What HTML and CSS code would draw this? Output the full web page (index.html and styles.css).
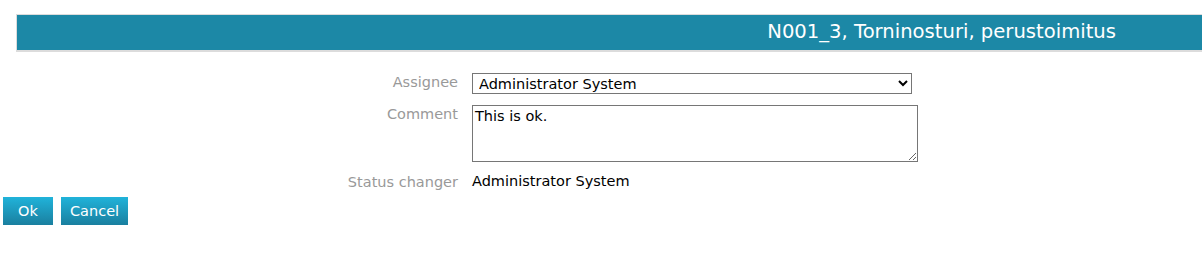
FILE: index.html
```html
<!DOCTYPE html>
<html lang="en">
<head>
  <meta charset="UTF-8">
  <title>Status change</title>
  <link rel="stylesheet" href="styles.css">
</head>
<body>

<div class="header">
  <h1 class="title">N001_3, Torninosturi, perustoimitus</h1>
</div>

<div class="form">
  <label class="label" for="assignee">Assignee</label>
  <div class="field">
    <select id="assignee" class="select">
      <option>Administrator System</option>
    </select>
  </div>

  <label class="label" for="comment">Comment</label>
  <div class="field">
    <textarea id="comment" class="comment">This is ok.</textarea>
  </div>

  <div class="label">Status changer</div>
  <div class="field value">Administrator System</div>
</div>

<div class="buttons">
  <button class="btn">Ok</button>
  <button class="btn">Cancel</button>
</div>

</body>
</html>
```

FILE: styles.css
```css
body {
  margin: 0;
  font-family: 'DejaVu Sans', sans-serif;
  font-size: 14.5px;
  color: #000;
  background-color: #fff;
}

.header {
  margin: 14px 0 0 16px;
  height: 35px;
  background-color: #1c88a6;
  border: 1px solid #dcdcdc;
  border-right: none;
  border-bottom: 2px solid #dcdcdc;
  display: flex;
  justify-content: flex-end;
  align-items: center;
}

.title {
  margin: 0 86px 2px 0;
  font-size: 19.6px;
  font-weight: normal;
  color: #fff;
}

.form {
  display: grid;
  grid-template-columns: 130px 460px;
  column-gap: 14px;
  row-gap: 11px;
  margin: 21px 0 0 328px;
  align-items: start;
}

.label {
  text-align: right;
  color: #999;
  padding-top: 1px;
}

.select {
  width: 440px;
  height: 21px;
  font-family: inherit;
  font-size: 14.5px;
  border: 1px solid #767676;
  border-radius: 0;
  background-color: #fff;
  padding: 0 2px;
}

.comment {
  display: block;
  width: 440px;
  height: 51px;
  font-family: inherit;
  font-size: 14.5px;
  border: 1px solid #767676;
  padding: 2px;
  resize: both;
}

.value {
  padding-top: 0;
}

.buttons {
  margin: 7px 0 0 3px;
  display: flex;
  gap: 8px;
}

.btn {
  height: 28px;
  padding: 0 9px;
  min-width: 50px;
  font-family: inherit;
  font-size: 14.5px;
  color: #fff;
  border: none;
  background: linear-gradient(#20b3da, #1a7f9f);
  cursor: pointer;
}
```
